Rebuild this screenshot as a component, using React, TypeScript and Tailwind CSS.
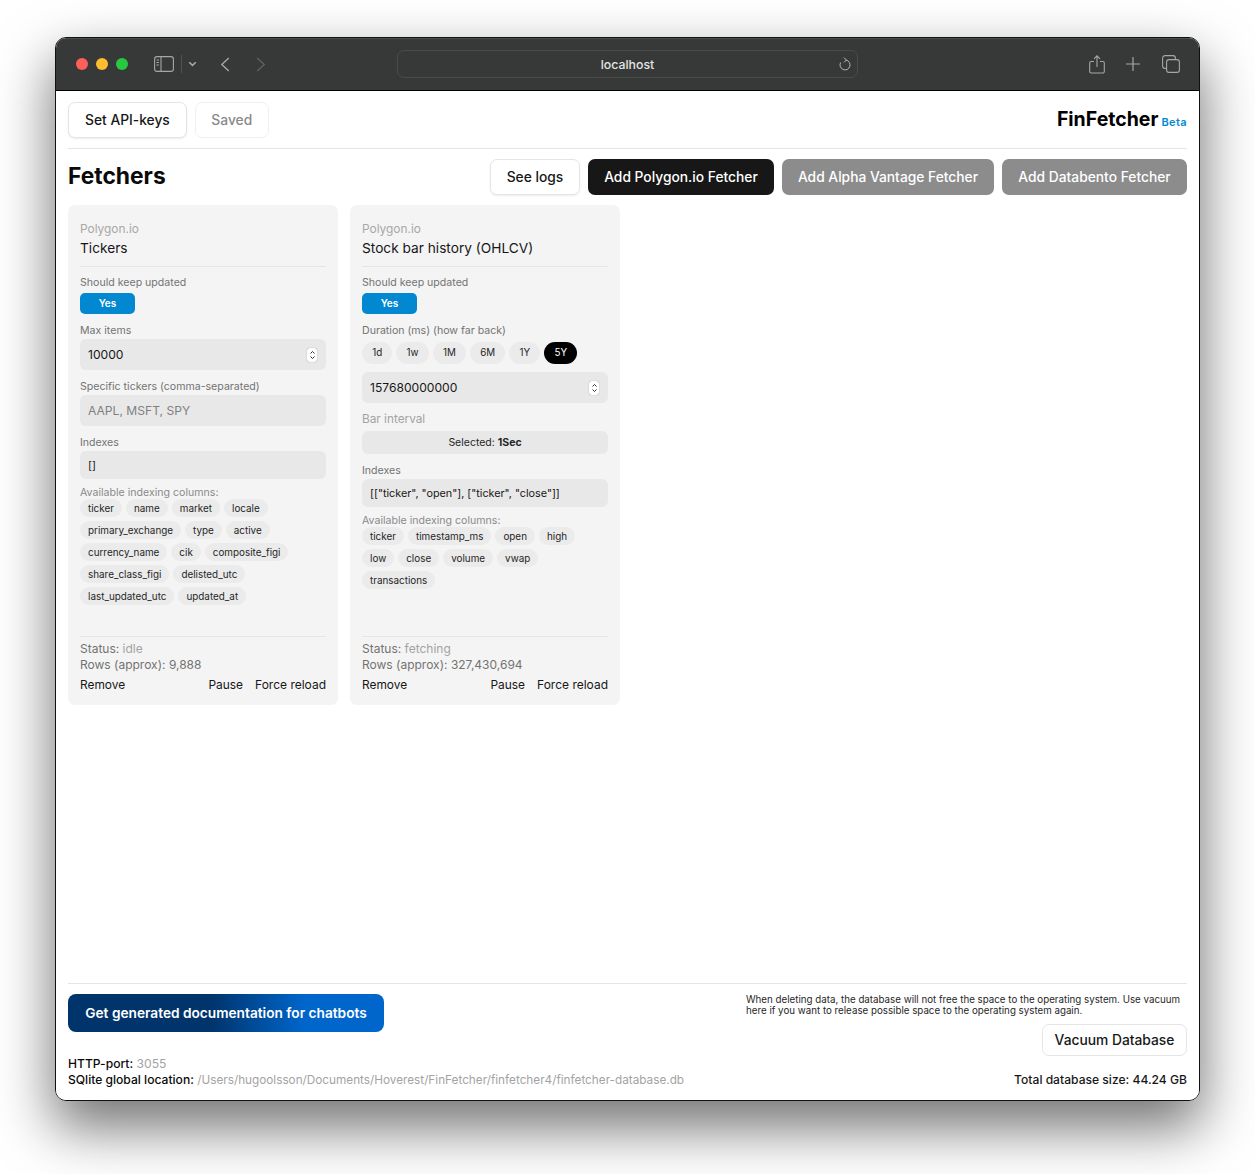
import React from "react";

const Label = ({ children }: { children: React.ReactNode }) => (
  <div className="text-[10.6px] leading-[14px] text-[#737373]">{children}</div>
);

const Spinner = () => (
  <div className="mr-px flex h-[14px] w-[10px] flex-col items-center justify-center rounded-[3px] bg-white shadow-[0_0_1px_rgba(0,0,0,0.5)]">
    <svg width="7" height="12" viewBox="0 0 7 12" fill="none" stroke="#333" strokeWidth="1">
      <path d="M1.5 4.5 L3.5 2.5 L5.5 4.5" />
      <path d="M1.5 7.5 L3.5 9.5 L5.5 7.5" />
    </svg>
  </div>
);

const Field = ({ value, placeholder, spin, small }: { value?: string; placeholder?: string; spin?: boolean; small?: boolean }) => (
  <div className={`flex items-center justify-between rounded-[6px] bg-[#e8e8e8] px-2 ${small ? "h-[28px] pt-[2px] text-[10.8px]" : "h-[31px] text-[12.1px]"} ${value ? "text-[#171717]" : "text-[11.8px] text-[#808080]"}`}>
    <span>{value ?? placeholder}</span>
    {spin && <Spinner />}
  </div>
);

const Chips = ({ items }: { items: string[] }) => (
  <div className="-mt-px flex flex-wrap gap-x-1 gap-y-1">
    {items.map((c) => (
      <span key={c} className="flex h-[18px] items-center rounded-full bg-[#ebebeb] px-2 text-[9.9px] text-[#262626]">
        {c}
      </span>
    ))}
  </div>
);

const Yes = () => (
  <div className="mt-[3px] flex h-[21px] w-[55px] items-center justify-center rounded-[5px] bg-[#0288d1] text-[10px] font-semibold text-white">Yes</div>
);

const Footer = ({ status, rows }: { status: string; rows: string }) => (
  <div className="mt-auto">
    <div className="border-t border-[#e5e5e5] pt-[4px] text-[12px] leading-[16px] text-[#737373]">
      <div>
        Status: <span className="text-[#a3a3a3]">{status}</span>
      </div>
      <div>Rows (approx): {rows}</div>
    </div>
    <div className="mt-[4px] flex justify-between text-[11.9px] leading-[16px] text-[#171717]">
      <span>Remove</span>
      <span className="flex gap-3">
        <span>Pause</span>
        <span className="text-[12px]">Force reload</span>
      </span>
    </div>
  </div>
);

const CardHead = ({ title }: { title: string }) => (
  <div className="border-b border-[#e5e5e5] pb-[8px]">
    <div className="text-[11.9px] leading-[16px] text-[#a8a8a8]">Polygon.io</div>
    <div className="mt-[1px] text-[13.7px] leading-[20px] text-[#171717]">{title}</div>
  </div>
);

const TrafficDot = ({ c }: { c: string }) => <span className={`h-3 w-3 rounded-full ${c}`} />;

export default function App() {
  return (
    <div className="h-[1174px] w-[1255px] bg-white pl-[55px] pt-[37px] font-['Inter','Liberation_Sans',sans-serif]">
      <div className="flex h-[1064px] w-[1145px] flex-col overflow-hidden rounded-[11px] border border-[#111] shadow-[0_25px_55px_2px_rgba(0,0,0,0.55)]">
        {/* Safari bar */}
        <div className="flex h-[53px] shrink-0 items-center border-b border-black bg-[#373938] shadow-[inset_0_1px_0_rgba(255,255,255,0.1)]">
          <div className="ml-5 flex gap-2">
            <TrafficDot c="bg-[#ff5f57]" />
            <TrafficDot c="bg-[#febc2e]" />
            <TrafficDot c="bg-[#28c840]" />
          </div>
          <svg className="ml-[26px]" width="20" height="16" viewBox="0 0 20 16" fill="none" stroke="#a6a6a6" strokeWidth="1.1">
            <rect x="0.6" y="0.6" width="18.8" height="14.8" rx="2.5" />
            <path d="M7 0.6 V15.4" />
            <path d="M2.5 4 H5 M2.5 6.5 H5 M2.5 9 H5" />
          </svg>
          <div className="ml-[7px] h-[18px] w-px bg-[#505050]" />
          <svg className="ml-[6px]" width="9" height="6" viewBox="0 0 9 6" fill="none" stroke="#a6a6a6" strokeWidth="1.6">
            <path d="M1.2 1.2 L4.5 4.4 L7.8 1.2" />
          </svg>
          <svg className="ml-[23px]" width="10" height="15" viewBox="0 0 10 15" fill="none" stroke="#a6a6a6" strokeWidth="1.4">
            <path d="M8.8 1 L1.8 7.5 L8.8 14" />
          </svg>
          <svg className="ml-[26px]" width="10" height="15" viewBox="0 0 10 15" fill="none" stroke="#5f6160" strokeWidth="1.4">
            <path d="M1.2 1 L8.2 7.5 L1.2 14" />
          </svg>
          <div className="relative ml-[131px] flex h-[28px] w-[461px] items-center justify-center rounded-[7px] border border-[#4a4c4b] pt-[2px] text-[12.3px] font-medium text-[#e4e4e4]">
            localhost
            <svg className="absolute right-[5px] top-[6px]" width="14" height="15" viewBox="0 0 14 15" fill="none" stroke="#b5b5b5" strokeWidth="1">
              <path d="M8 3 A5 5 0 1 1 2.6 5.6" />
              <path d="M6 0.6 L8.4 3 L6 5.4" />
            </svg>
          </div>
          <svg className="ml-[231px]" width="16" height="19" viewBox="0 0 16 19" fill="none" stroke="#a6a6a6" strokeWidth="1.1">
            <path d="M5 6.5 H2.2 a1.5 1.5 0 0 0 -1.5 1.5 V16.5 a1.5 1.5 0 0 0 1.5 1.5 H13.8 a1.5 1.5 0 0 0 1.5 -1.5 V8 a1.5 1.5 0 0 0 -1.5 -1.5 H11" />
            <path d="M8 12 V1 M5 3.8 L8 0.8 L11 3.8" />
          </svg>
          <svg className="ml-[21px]" width="14" height="14" viewBox="0 0 14 14" fill="none" stroke="#a6a6a6" strokeWidth="1.2">
            <path d="M7 0 V14 M0 7 H14" />
          </svg>
          <svg className="ml-[22px]" width="18" height="18" viewBox="0 0 18 18" fill="none" stroke="#a6a6a6" strokeWidth="1.1">
            <rect x="4.6" y="4.6" width="12.8" height="12.8" rx="2.5" />
            <path d="M4.6 13.4 H3 a2.4 2.4 0 0 1 -2.4 -2.4 V3 a2.4 2.4 0 0 1 2.4 -2.4 H11 a2.4 2.4 0 0 1 2.4 2.4 V4.6" />
          </svg>
        </div>

        {/* Page */}
        <div className="flex min-h-0 flex-1 flex-col bg-white px-3">
          <div className="flex shrink-0 items-center justify-between border-b border-[#e5e5e5] pb-[10px] pt-[11px]">
            <div className="flex gap-2">
              <button className="h-9 rounded-[7px] border border-[#e5e5e5] bg-white px-4 text-[13.8px] font-medium text-[#171717] shadow-[0_1px_2px_rgba(0,0,0,0.08)]">Set API-keys</button>
              <button className="h-9 w-[74px] rounded-[7px] border border-[#efefef] bg-white text-[13.8px] font-medium text-[#8a8a8a]">Saved</button>
            </div>
            <div className="mb-[3px] flex items-baseline gap-[3px]">
              <span className="text-[19.5px] font-bold leading-[28px] text-black">FinFetcher</span>
              <span className="text-[11px] font-semibold tracking-[0.4px] text-[#0288d1]">Beta</span>
            </div>
          </div>

          <div className="mt-[10px] flex shrink-0 items-center justify-between">
            <h1 className="pb-[2px] text-[22.8px] font-bold text-[#0a0a0a]">Fetchers</h1>
            <div className="flex gap-2">
              <button className="h-9 w-[90px] rounded-[7px] border border-[#e5e5e5] bg-white text-[13.8px] font-medium text-[#171717] shadow-[0_1px_2px_rgba(0,0,0,0.08)]">See logs</button>
              <button className="h-9 w-[186px] rounded-[7px] bg-[#171717] text-[13.8px] font-medium text-white">Add Polygon.io Fetcher</button>
              <button className="h-9 w-[212px] rounded-[7px] bg-[#8c8c8c] text-[13.8px] font-medium text-white">Add Alpha Vantage Fetcher</button>
              <button className="h-9 w-[185px] rounded-[7px] bg-[#8c8c8c] text-[13.8px] font-medium text-white">Add Databento Fetcher</button>
            </div>
          </div>

          <div className="mt-[10px] flex flex-1 items-start gap-3">
            {/* Card 1 */}
            <div className="flex h-[500px] w-[270px] flex-col rounded-[7px] bg-[#f4f4f4] px-3 pb-3 pt-4">
              <CardHead title="Tickers" />
              <div className="mt-[9px]"><Label>Should keep updated</Label></div>
              <Yes />
              <div className="mb-[1px] mt-[10px]"><Label>Max items</Label></div>
              <Field value="10000" spin />
              <div className="mb-[1px] mt-[10px]"><Label>Specific tickers (comma-separated)</Label></div>
              <Field placeholder="AAPL, MSFT, SPY" />
              <div className="mb-[1px] mt-[10px]"><Label>Indexes</Label></div>
              <Field value="[]" small />
              <div className="mt-[7px]"><Label><span className="text-[#8a8a8a]">Available indexing columns:</span></Label></div>
              <Chips items={["ticker", "name", "market", "locale", "primary_exchange", "type", "active", "currency_name", "cik", "composite_figi", "share_class_figi", "delisted_utc", "last_updated_utc", "updated_at"]} />
              <Footer status="idle" rows="9,888" />
            </div>

            {/* Card 2 */}
            <div className="flex h-[500px] w-[270px] flex-col rounded-[7px] bg-[#f4f4f4] px-3 pb-3 pt-4">
              <CardHead title="Stock bar history (OHLCV)" />
              <div className="mt-[9px]"><Label>Should keep updated</Label></div>
              <Yes />
              <div className="mb-[4px] mt-[10px]"><Label>Duration (ms) (how far back)</Label></div>
              <div className="flex gap-1">
                {["1d", "1w", "1M", "6M", "1Y"].map((d) => (
                  <span key={d} className="flex h-[22px] items-center rounded-full bg-[#ebebeb] px-[10.2px] text-[9.8px] text-[#262626]">{d}</span>
                ))}
                <span className="flex h-[22px] items-center rounded-full bg-black px-[10.2px] text-[9.8px] text-white">5Y</span>
              </div>
              <div className="mt-2"><Field value="157680000000" spin /></div>
              <div className="mt-[8px] text-[11.8px] leading-[16px] text-[#a3a3a3]">Bar interval</div>
              <div className="mt-1 flex h-[23px] items-center justify-center rounded-[6px] bg-[#e8e8e8] text-[10.5px] text-[#262626]">
                <span>Selected: <b className="font-bold">1Sec</b></span>
              </div>
              <div className="mb-[1px] mt-[10px]"><Label>Indexes</Label></div>
              <Field value={'[["ticker", "open"], ["ticker", "close"]]'} small />
              <div className="mt-[7px]"><Label><span className="text-[#8a8a8a]">Available indexing columns:</span></Label></div>
              <Chips items={["ticker", "timestamp_ms", "open", "high", "low", "close", "volume", "vwap", "transactions"]} />
              <Footer status="fetching" rows="327,430,694" />
            </div>
          </div>

          {/* Bottom */}
          <div className="flex shrink-0 justify-between border-t border-[#e5e5e5] pt-[10px]">
            <div className="flex flex-col">
              <button className="h-[38px] w-[316px] rounded-[8px] bg-[linear-gradient(90deg,#00346b_0%,#00346b_45%,#0066cc_75%,#0066cc_100%)] text-[13.7px] font-semibold text-white">Get generated documentation for chatbots</button>
              <div className="mt-[24px] text-[12.1px] leading-[16px]">
                <div><span className="font-medium text-[#0a0a0a]">HTTP-port:</span> <span className="text-[#a3a3a3]">3055</span></div>
                <div className="whitespace-nowrap"><span className="font-medium text-[#0a0a0a]">SQlite global location:</span> <span className="text-[11.75px] text-[#a3a3a3]">/Users/hugoolsson/Documents/Hoverest/FinFetcher/finfetcher4/finfetcher-database.db</span></div>
              </div>
            </div>
            <div className="flex w-[441px] flex-col items-end">
              <p className="w-full text-[9.75px] leading-[11px] text-[#262626]">
                When deleting data, the database will not free the space to the operating system. Use vacuum here if you want to release possible space to the operating system again.
              </p>
              <button className="mt-[8px] h-[32px] w-[145px] rounded-[7px] border border-[#e5e5e5] bg-white text-[13.8px] font-medium text-[#171717]">Vacuum Database</button>
              <div className="mt-[16px] text-[12.1px] font-medium leading-[16px] text-[#171717]">Total database size: 44.24 GB</div>
            </div>
          </div>
          <div className="h-[12px] shrink-0" />
        </div>
      </div>
    </div>
  );
}
